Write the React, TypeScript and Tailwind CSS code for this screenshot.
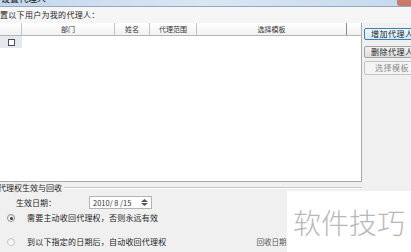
import React from "react";

const cols = [
  { w: "w-[22px]", label: "" },
  { w: "w-[93px]", label: "部门" },
  { w: "w-[35px]", label: "姓名" },
  { w: "w-[47px]", label: "代理范围" },
  { w: "w-[150px]", label: "选择模板" },
];

export default function App() {
  return (
    <div className="relative w-[411px] h-[252px] overflow-hidden bg-[#f0f0f0] font-['Noto_Sans_CJK_SC',sans-serif] text-[8px] leading-none text-[#1e1e1e]">
      {/* title bar, mostly cut off */}
      <div className="h-[7px] flex overflow-hidden bg-gradient-to-r from-[#c3d7ec] via-[#d9e7f4] to-[#c6d9ed] border-b border-[#91a8bf]">
        <div className="-mt-[6px] pl-[1px] text-[9px] text-[#222]">设置代理人</div>
        <div className="ml-auto w-[14px] h-[6px] rounded-bl-[3px] bg-[#c97a6a]" />
      </div>

      {/* label */}
      <div className="h-[16px] flex items-center bg-[#f6f6f6] tracking-[0.3px]">
        <span>置以下用户为我的代理人：</span>
      </div>

      {/* list + buttons */}
      <div className="flex h-[159px]">
        <div className="w-[362px] shrink-0 bg-white border-r border-b border-[#a9a9a9] flex flex-col">
          <div className="flex h-[13px] border-b border-[#b5b5b5] bg-gradient-to-b from-white to-[#f1f1f1]">
            {cols.map((c, i) => (
              <div
                key={i}
                className={`${c.w} shrink-0 flex items-center justify-center border-r border-[#c4c4c4] text-[7px] text-[#333] ${i === 4 ? "border-r-[#8d8d8d]" : ""}`}
              >
                {c.label}
              </div>
            ))}
          </div>
          <div className="flex h-[12px]">
            <div className="w-[22px] flex items-center justify-center bg-[#e4e9ef]">
              <div className="w-[7px] h-[7px] border border-[#4d4d4d] bg-white" />
            </div>
          </div>
        </div>

        <div className="flex-1 pl-[2px] flex flex-col">
          <div className="mt-[5px] w-[56px] h-[12px] flex items-center pl-[6px] border border-[#3c7fb1] rounded-[2px] bg-gradient-to-b from-[#eaf6fd] to-[#d3e9f8] tracking-[0.5px]">
            增加代理人
          </div>
          <div className="mt-[6px] w-[56px] h-[12px] flex items-center pl-[6px] border border-[#a3a3a3] rounded-[2px] bg-gradient-to-b from-[#f2f2f2] to-[#dedede] tracking-[0.5px]">
            删除代理人
          </div>
          <div className="mt-[3px] w-[56px] h-[14px] flex items-center pl-[10px] border border-[#c0c4c7] rounded-[2px] bg-[#f4f4f4] text-[#8d8d8d] tracking-[0.5px]">
            选择模板
          </div>
        </div>
      </div>

      {/* group: 代理权生效与回收 */}
      <div className="flex flex-col">
        <div className="h-[12px] flex items-center">
          <span className="-ml-[2px] pr-[2px]">代理权生效与回收</span>
          <div className="w-[298px] h-[2px] border-t border-[#c9c9c9] border-b border-b-white" />
        </div>

        <div className="mt-[2px] h-[13px] flex items-center">
          <span className="pl-[16px] w-[89px] text-[8px]">生效日期：</span>
          <div className="w-[63px] h-[13px] flex items-center bg-white border border-[#b3b3b3] pl-[3px]">
            <span className="text-[7.5px] text-[#333]">2010/ 8 /15</span>
            <div className="ml-auto mr-[2px] w-[9px] h-[9px] flex flex-col items-center justify-center gap-[1px]">
              <svg width="7" height="3" viewBox="0 0 7 3"><path d="M0 3 L3.5 0 L7 3Z" fill="#555" /></svg>
              <svg width="7" height="3" viewBox="0 0 7 3"><path d="M0 0 L3.5 3 L7 0Z" fill="#555" /></svg>
            </div>
          </div>
        </div>

        <div className="mt-[3px] h-[12px] flex items-center">
          <div className="ml-[7px] w-[8px] h-[8px] rounded-full border border-[#8c8c8c] bg-gradient-to-b from-[#e6e6e6] to-white flex items-center justify-center">
            <div className="w-[3px] h-[3px] rounded-full bg-[#2e3b47]" />
          </div>
          <span className="ml-[12px] tracking-[0.2px]">需要主动收回代理权，否则永远有效</span>
        </div>

        <div className="mt-[12px] h-[12px] flex items-center">
          <div className="ml-[7px] w-[8px] h-[8px] rounded-full border border-[#c6c6c6] bg-gradient-to-b from-[#ececec] to-white" />
          <span className="ml-[12px] tracking-[0.2px]">到以下指定的日期后，自动收回代理权</span>
          <span className="ml-[90px] text-[7.5px] text-[#555]">回收日期</span>
        </div>
      </div>

      {/* watermark */}
      <div className="absolute right-0 bottom-0 w-[124px] h-[61px] bg-white flex items-center justify-center">
        <span className="text-[28px] leading-none font-light text-[#b8b8b8]">软件技巧</span>
      </div>
    </div>
  );
}
